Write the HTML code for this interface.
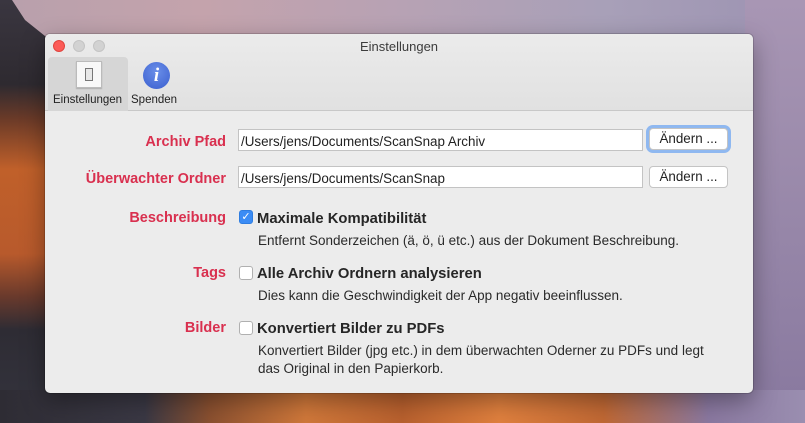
<!DOCTYPE html>
<html><head><meta charset="utf-8">
<style>
*{margin:0;padding:0;box-sizing:border-box}
body{width:805px;height:423px;overflow:hidden;position:relative;font-family:"Liberation Sans",sans-serif;
background:linear-gradient(90deg,#b8a0ac 0%,#c4a3ac 25%,#b7a2b4 50%,#a8a0b8 75%,#9c92b2 100%);}
.bg1{position:absolute;left:0;top:0;width:50px;height:423px;background:linear-gradient(180deg,#3a3640 0%,#2e2a30 20%,#6a3a28 28%,#c0602a 40%,#b85a2c 60%,#6a3a2c 70%,#2e2c34 78%,#34343e 100%);clip-path:polygon(0 0,12px 0,25px 20px,50px 40px,50px 100%,0 100%);}
.bg2{position:absolute;left:0;top:390px;width:805px;height:33px;background:linear-gradient(90deg,#2e2c34 0%,#3a3844 18%,#8a5030 26%,#d0783a 38%,#b8602e 50%,#e0803e 62%,#c06834 75%,#8a78a0 88%,#9a8eb0 100%);}
.bg3{position:absolute;left:745px;top:0;width:60px;height:395px;background:linear-gradient(180deg,#a896b4,#9686a8 60%,#8a7aa0);}
.win{position:absolute;left:45px;top:34px;width:708px;height:359px;background:#ececec;border-radius:5px;overflow:hidden;box-shadow:0 0 0 1px rgba(0,0,0,.15),0 8px 24px rgba(0,0,0,.35)}
.tb{height:77px;background:linear-gradient(#ebebeb,#e1e1e1);border-bottom:1px solid #c8c8c8;position:relative}
.title{position:absolute;top:5px;width:100%;text-align:center;font-size:13px;color:#3c3c3c}
.dot{position:absolute;top:6px;width:12px;height:12px;border-radius:50%;background:#d2d2d2;border:1px solid #c4c4c4}
.sel{position:absolute;left:3px;top:23px;width:80px;height:54px;background:#d6d6d6;border-radius:4px 4px 0 0}
.lbl{position:absolute;top:60px;font-size:11.5px;color:#222}
.rl{position:absolute;right:527px;font-size:14.5px;font-weight:bold;color:#d9304f;text-align:right;white-space:nowrap}
.tf{position:absolute;left:193px;width:405px;height:22px;background:#fff;border:1px solid #c3c3c3;font-size:13.4px;padding:4px 2px 2px;color:#222;white-space:nowrap}
.btn{position:absolute;left:604px;width:79px;height:22px;background:#fff;border:1px solid #c4c4c4;border-radius:4px;font-size:13.4px;text-align:center;line-height:20px;color:#222}
.cb{position:absolute;left:194px;width:14px;height:14px;border:1px solid #b0b0b0;border-radius:3px;background:#fff}
.ct{position:absolute;left:212px;font-size:14.8px;font-weight:bold;color:#262626;white-space:nowrap}
.d{position:absolute;left:213px;font-size:13.5px;color:#2a2a2a;line-height:18px;white-space:nowrap}
</style></head><body>
<div class="bg1"></div><div class="bg3"></div><div class="bg2"></div>
<div class="win">
 <div class="tb">
  <div class="title">Einstellungen</div>
  <div class="dot" style="left:8px;background:#fc5b57;border-color:#e0443e"></div>
  <div class="dot" style="left:28px"></div>
  <div class="dot" style="left:48px"></div>
  <div class="sel"></div>
  <div style="position:absolute;left:31px;top:27px;width:26px;height:27px;background:#f8f8f8;border:1px solid #bbb;box-shadow:0 1px 1px rgba(0,0,0,.2)"><div style="position:absolute;left:8px;top:6px;width:8px;height:13px;border:1px solid #777;background:#e8e8e8"></div></div>
  <div style="position:absolute;left:98px;top:28px;width:27px;height:27px;border-radius:50%;background:radial-gradient(circle at 50% 35%,#6a8ee8,#3a5fcf);color:#fff;font:italic bold 19px 'Liberation Serif',serif;text-align:center;line-height:27px">i</div>
  <div class="lbl" style="left:8px">Einstellungen</div>
  <div class="lbl" style="left:86px">Spenden</div>
 </div>
 <div class="rl" style="top:100px">Archiv Pfad</div>
 <div class="tf" style="top:95px">/Users/jens/Documents/ScanSnap Archiv</div>
 <div class="btn" style="top:94px;box-shadow:0 0 0 3px #8fb8f0">Ändern ...</div>
 <div class="rl" style="top:137px">Überwachter Ordner</div>
 <div class="tf" style="top:132px">/Users/jens/Documents/ScanSnap</div>
 <div class="btn" style="top:132px">Ändern ...</div>
 <div class="rl" style="top:176px">Beschreibung</div>
 <div class="cb" style="top:176px;background:#3b8cf5;border-color:#2f7de0;color:#fff;font-size:11px;text-align:center;line-height:12px">✓</div>
 <div class="ct" style="top:177px">Maximale Kompatibilität</div>
 <div class="d" style="top:198px">Entfernt Sonderzeichen (ä, ö, ü etc.) aus der Dokument Beschreibung.</div>
 <div class="rl" style="top:231px">Tags</div>
 <div class="cb" style="top:232px"></div>
 <div class="ct" style="top:232px">Alle Archiv Ordnern analysieren</div>
 <div class="d" style="top:253px">Dies kann die Geschwindigkeit der App negativ beeinflussen.</div>
 <div class="rl" style="top:286px">Bilder</div>
 <div class="cb" style="top:287px"></div>
 <div class="ct" style="top:287px">Konvertiert Bilder zu PDFs</div>
 <div class="d" style="top:308px">Konvertiert Bilder (jpg etc.) in dem überwachten Oderner zu PDFs und legt<br>das Original in den Papierkorb.</div>
</div>
</body></html>
